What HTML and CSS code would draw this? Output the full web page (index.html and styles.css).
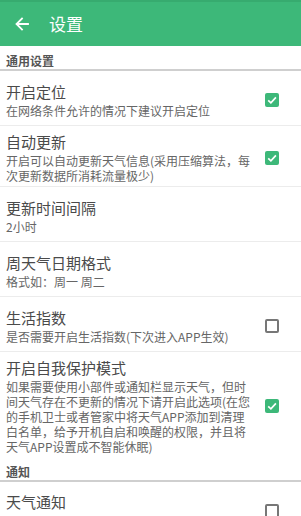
FILE: index.html
```html
<!DOCTYPE html>
<html lang="zh-CN">
<head>
<meta charset="utf-8">
<title>设置</title>
<link rel="stylesheet" href="styles.css">
</head>
<body>
<div class="app">
  <header class="appbar">
    <svg class="back" width="14" height="14" viewBox="0 0 14 14" aria-hidden="true">
      <path d="M13 7H2M7 1.5L1.5 7L7 12.5" fill="none" stroke="#fff" stroke-width="1.8" stroke-linecap="square"/>
    </svg>
    <h1 class="title">设置</h1>
  </header>

  <div class="section">通用设置</div>

  <div class="item">
    <div class="text">
      <div class="item-title">开启定位</div>
      <div class="item-sub">在网络条件允许的情况下建议开启定位</div>
    </div>
    <span class="check on"><svg viewBox="0 0 14 14" width="14" height="14"><path d="M3.2 7.3L5.9 9.8L10.9 4.4" fill="none" stroke="#fff" stroke-width="1.7"/></svg></span>
  </div>

  <div class="item">
    <div class="text">
      <div class="item-title">自动更新</div>
      <div class="item-sub">开启可以自动更新天气信息(采用压缩算法，每次更新数据所消耗流量极少)</div>
    </div>
    <span class="check on"><svg viewBox="0 0 14 14" width="14" height="14"><path d="M3.2 7.3L5.9 9.8L10.9 4.4" fill="none" stroke="#fff" stroke-width="1.7"/></svg></span>
  </div>

  <div class="item">
    <div class="text">
      <div class="item-title">更新时间间隔</div>
      <div class="item-sub">2小时</div>
    </div>
  </div>

  <div class="item">
    <div class="text">
      <div class="item-title">周天气日期格式</div>
      <div class="item-sub">格式如：周一 周二</div>
    </div>
  </div>

  <div class="item">
    <div class="text">
      <div class="item-title">生活指数</div>
      <div class="item-sub">是否需要开启生活指数(下次进入APP生效)</div>
    </div>
    <span class="check off"></span>
  </div>

  <div class="item last">
    <div class="text">
      <div class="item-title">开启自我保护模式</div>
      <div class="item-sub">如果需要使用小部件或通知栏显示天气，但时间天气存在不更新的情况下请开启此选项(在您的手机卫士或者管家中将天气APP添加到清理白名单，给予开机自启和唤醒的权限，并且将天气APP设置成不智能休眠)</div>
    </div>
    <span class="check on"><svg viewBox="0 0 14 14" width="14" height="14"><path d="M3.2 7.3L5.9 9.8L10.9 4.4" fill="none" stroke="#fff" stroke-width="1.7"/></svg></span>
  </div>

  <div class="section">通知</div>

  <div class="item">
    <div class="text text-top">
      <div class="item-title">天气通知</div>
    </div>
    <span class="check off"></span>
  </div>
</div>
</body>
</html>
```

FILE: styles.css
```css
html, body {
  margin: 0;
  padding: 0;
  background: #fff;
  overflow: hidden;
}
body {
  font-family: "Noto Sans CJK SC", "Noto Sans", sans-serif;
  width: 301px;
  height: 516px;
}
.app {
  display: flex;
  flex-direction: column;
}
.appbar {
  height: 46px;
  box-sizing: border-box;
  background: #3db879;
  border-top: 2px solid #37ab6f;
  display: flex;
  align-items: center;
  padding: 0 0 0 15px;
}
.back {
  display: block;
}
.title {
  margin: 0 0 0 20px;
  font-size: 17px;
  font-weight: normal;
  color: #fff;
  line-height: 20px;
}
.section {
  font-size: 12px;
  line-height: 20px;
  color: #555;
  font-weight: bold;
  padding: 5px 6px 0;
  height: 25px;
  box-sizing: border-box;
  border-bottom: 2px solid #cfcfcf;
}
.item {
  display: flex;
  align-items: center;
  gap: 13px;
  min-height: 55px;
  box-sizing: border-box;
  padding: 6px 22px 3px 6px;
  border-bottom: 1px solid #ececec;
}
.item.last {
  border-bottom: none;
}
.text {
  width: 246px;
  flex: none;
}
.text-top {
  align-self: flex-start;
  margin-top: 4px;
}
.item-title {
  font-size: 15px;
  line-height: 20px;
  color: #4a4a4a;
}
.item-sub {
  font-size: 12px;
  line-height: 15px;
  color: #666;
  margin-top: 1px;
}
.check {
  width: 14px;
  height: 14px;
  box-sizing: border-box;
  border-radius: 2px;
  flex: none;
  display: block;
}
.check svg {
  display: block;
}
.check.on {
  background: #3db879;
}
.check.off {
  border: 2px solid #777;
}
```
